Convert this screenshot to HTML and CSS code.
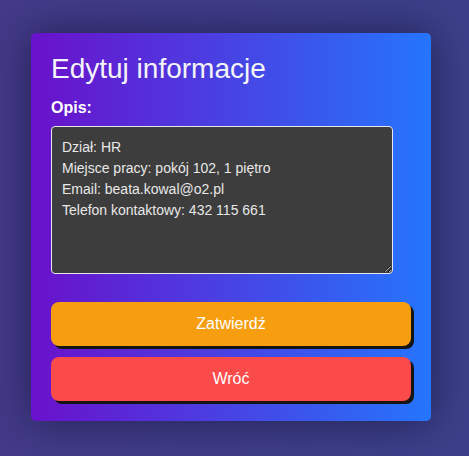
FILE: index.html
```html
<!DOCTYPE html>
<html lang="pl">
<head>
<meta charset="utf-8">
<title>Edytuj informacje</title>
<link rel="stylesheet" href="styles.css">
</head>
<body>
<div class="card">
  <h2 class="title">Edytuj informacje</h2>
  <label class="label" for="opis">Opis:</label>
  <textarea class="area" id="opis">Dział: HR
Miejsce pracy: pokój 102, 1 piętro
Email: beata.kowal@o2.pl
Telefon kontaktowy: 432 115 661</textarea>
  <button class="btn btn-ok">Zatwierdź</button>
  <button class="btn btn-back">Wróć</button>
</div>
</body>
</html>
```

FILE: styles.css
```css
html, body {
  margin: 0;
  height: 100%;
}
body {
  background: linear-gradient(90deg, #433a88 0%, #3b4089 100%);
  font-family: "Liberation Sans", Arial, sans-serif;
  padding: 33px 0 0 31px;
  box-sizing: border-box;
  overflow: hidden;
}
.card {
  width: 400px;
  box-sizing: border-box;
  padding: 20px;
  border-radius: 5px;
  background: linear-gradient(90deg, #6a11cb 0%, #2575fc 100%);
  box-shadow: 0 0 40px rgba(10, 10, 40, 0.55);
  display: flex;
  flex-direction: column;
  align-items: flex-start;
  color: #fff;
}
.title {
  margin: 0 0 14px 0;
  font-size: 28px;
  font-weight: normal;
  line-height: 32px;
  color: #f4f4f8;
}
.label {
  font-size: 16px;
  font-weight: bold;
  line-height: 18px;
  margin-bottom: 9px;
}
.area {
  width: 342px;
  height: 148px;
  box-sizing: border-box;
  padding: 10px;
  margin: 0 0 28px 0;
  background: #3d3d3d;
  color: #e8e8e8;
  border: 1px solid #e6e6f0;
  border-radius: 4px;
  font-family: "Liberation Sans", Arial, sans-serif;
  font-size: 14px;
  line-height: 21px;
  resize: vertical;
  outline: none;
}
.btn {
  width: 360px;
  height: 44px;
  border: none;
  border-radius: 8px;
  font-family: "Liberation Sans", Arial, sans-serif;
  font-size: 16px;
  color: #fff;
  box-shadow: 3px 3px 0 #141414;
  cursor: pointer;
}
.btn-ok {
  background: #f69e10;
  margin-bottom: 11px;
}
.btn-back {
  background: #fa4a4a;
}
```
